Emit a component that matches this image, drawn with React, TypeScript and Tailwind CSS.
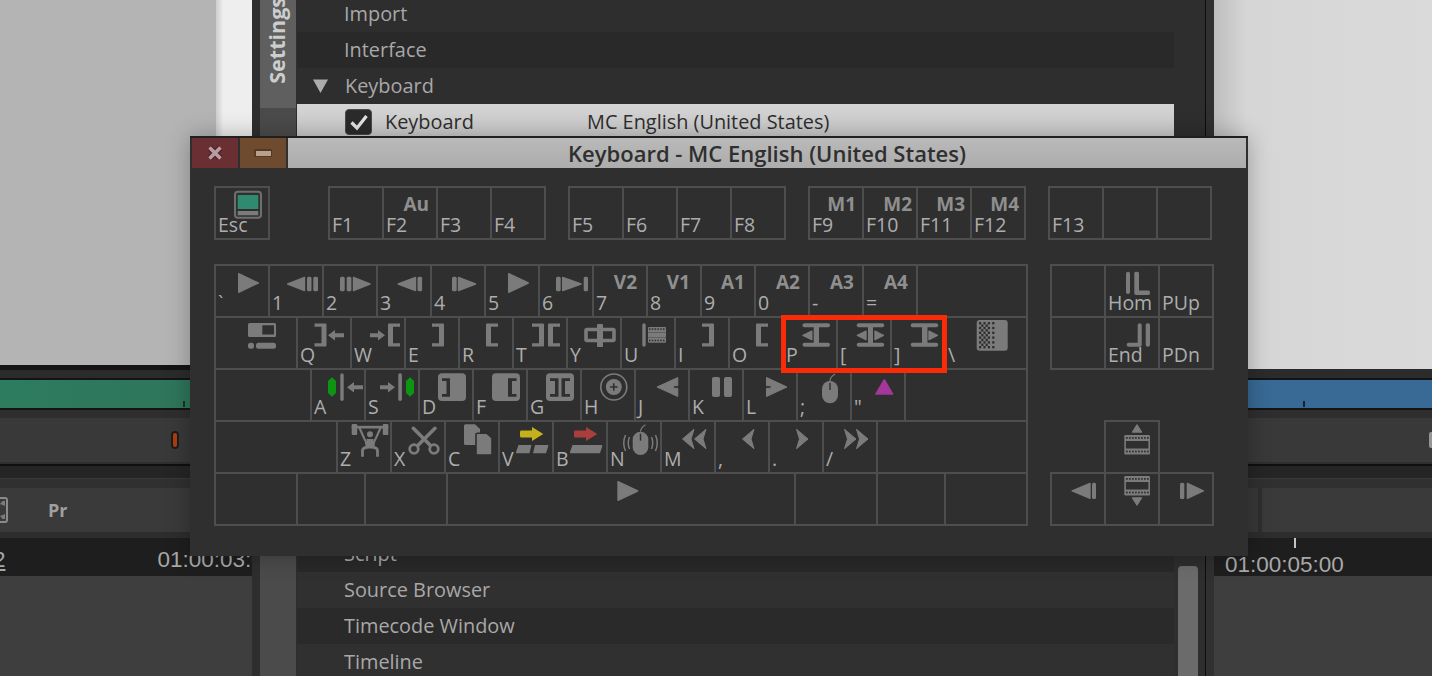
import React from 'react'

type Key = {
  w?: number
  label?: string
  tag?: string
  tagCls?: string
  icon?: React.ReactNode
}

const PURE = 54

// shapes share the grey fill from the svg wrapper
const Tri = ({ base, tip, y1, y2, fill }: { base: number; tip: number; y1: number; y2: number; fill?: string }) => (
  <path
    d={`M${base} ${y1} L${tip} ${(y1 + y2) / 2} L${base} ${y2} Z`}
    stroke={fill || '#7b7b7b'}
    fill={fill}
    strokeWidth="1.4"
    strokeLinejoin="round"
  />
)
const Up = ({ x1, x2, y1, y2, flip }: { x1: number; x2: number; y1: number; y2: number; flip?: boolean }) => (
  <path
    d={flip ? `M${x1} ${y1} H${x2} L${(x1 + x2) / 2} ${y2} Z` : `M${x1} ${y2} H${x2} L${(x1 + x2) / 2} ${y1} Z`}
    stroke="#7b7b7b"
    strokeWidth="1"
    strokeLinejoin="round"
  />
)
const Bar = ({ x, y, w, h, r = 1.5 }: { x: number; y: number; w: number; h: number; r?: number }) => (
  <rect x={x} y={y} width={w} height={h} rx={r} />
)
const BrR = ({ x, w = 12, fill }: { x: number; w?: number; fill?: string }) => (
  <path
    fill={fill}
    d={`M${x} 5.5 H${x + w - 1} Q${x + w} 5.5 ${x + w} 6.5 V27.5 Q${x + w} 28.5 ${x + w - 1} 28.5 H${x} V25.3 H${x + w - 5} V8.7 H${x} Z`}
  />
)
const BrL = ({ x, w = 12, fill }: { x: number; w?: number; fill?: string }) => (
  <path
    fill={fill}
    d={`M${x + w} 5.5 H${x + 1} Q${x} 5.5 ${x} 6.5 V27.5 Q${x} 28.5 ${x + 1} 28.5 H${x + w} V25.3 H${x + 5} V8.7 H${x + w} Z`}
  />
)
const ArrowL = ({ x, y = 17.3 }: { x: number; y?: number }) => (
  <path d={`M${x} ${y} L${x + 7} ${y - 5.3} V${y - 2} H${x + 16} V${y + 2} H${x + 7} V${y + 5.3} Z`} />
)
const ArrowR = ({ x, y = 17.3 }: { x: number; y?: number }) => (
  <path d={`M${x + 15} ${y} L${x + 8} ${y - 5.3} V${y - 2} H${x} V${y + 2} H${x + 8} V${y + 5.3} Z`} />
)
const Hex = ({ x }: { x: number }) => (
  <path d={`M${x + 4} 7.3 L${x + 8} 11 V23 L${x + 4} 26.7 L${x} 23 V11 Z`} fill="#0d9413" />
)
const ChevL = ({ x, w = 11.5 }: { x: number; w?: number }) => (
  <path
    d={`M${x} 17 L${x + w} 7.3 L${x + w - 3} 17 L${x + w} 26.7 Z`}
    stroke="#7b7b7b"
    strokeWidth="1"
    strokeLinejoin="round"
  />
)
const ChevR = ({ x, w = 11.5 }: { x: number; w?: number }) => (
  <path
    d={`M${x + w} 17 L${x} 7.3 L${x + 3} 17 L${x} 26.7 Z`}
    stroke="#7b7b7b"
    strokeWidth="1"
    strokeLinejoin="round"
  />
)
const Trim = ({ x }: { x: number }) => (
  <>
    <Bar x={x} y={5.3} w={27.5} h={4} r={2} />
    <Bar x={x} y={24.7} w={27.5} h={4} r={2} />
  </>
)
const Mouse = ({ x, y, w, h }: { x: number; y: number; w: number; h: number }) => (
  <>
    <rect x={x} y={y} width={w} height={h} rx={w / 2} />
    <path d={`M${x + w / 2} ${y + 2} V${y + 9}`} stroke="#2f2f2f" strokeWidth="1.4" fill="none" />
    <path d={`M${x + w / 2} ${y} Q${x + w / 2} ${y - 4} ${x + w / 2 + 5} ${y - 7}`} stroke="#7b7b7b" strokeWidth="1.2" fill="none" />
  </>
)
const FilmStrip = ({ x, y }: { x: number; y: number }) => (
  <>
    <rect x={x} y={y} width={25.7} height={19.5} rx={1.2} />
    <rect x={x + 1.6} y={y + 6} width={22.5} height={7.5} fill="#2f2f2f" />
    {[0, 1, 2, 3, 4, 5, 6, 7].map((i) => (
      <React.Fragment key={i}>
        <rect x={x + 1.8 + i * 3} y={y + 2} width={1.6} height={1.8} fill="#2f2f2f" />
        <rect x={x + 1.8 + i * 3} y={y + 15.6} width={1.6} height={1.8} fill="#2f2f2f" />
      </React.Fragment>
    ))}
  </>
)

// dithered square on the backslash key, dense on the left and solid on the right
const Dither = () => {
  const dots: React.ReactNode[] = []
  for (let c = 0; c < 8; c++) {
    for (let r = 0; r < 11; r++) {
      const keep = c < 5 ? (r + c) % 2 === 0 : (r + c) % 2 === 0 && r % 2 === 0
      if (keep) dots.push(<rect key={`${c}-${r}`} x={33 + c * 2.2} y={4 + r * 2.4} width={2.2} height={2.4} fill="#2f2f2f" />)
    }
  }
  return (
    <>
      <rect x={30.7} y={2} width={31} height={30.7} rx={3} />
      {dots}
    </>
  )
}

const fnGroups: Key[][] = [
  [
    {
      w: PURE,
      label: 'Esc',
      icon: (
        <>
          <rect x={19} y={3.8} width={26} height={26} rx={3} fill="none" stroke="#6f6f6f" strokeWidth="2" />
          <rect x={21.7} y={7} width={20.6} height={14} fill="#2f8a70" />
          <rect x={21.7} y={23} width={20.6} height={4.3} fill="#7b7b7b" />
        </>
      ),
    },
  ],
  [
    { label: 'F1' },
    { label: 'F2', tag: 'Au', tagCls: 'mr-[7px]' },
    { label: 'F3' },
    { label: 'F4' },
  ],
  [{ label: 'F5' }, { label: 'F6' }, { label: 'F7' }, { label: 'F8' }],
  [
    { label: 'F9', tag: 'M1', tagCls: 'mr-[6px]' },
    { label: 'F10', tag: 'M2', tagCls: 'mr-[4px]' },
    { label: 'F11', tag: 'M3', tagCls: 'mr-[5px]' },
    { label: 'F12', tag: 'M4', tagCls: 'mr-[5px]' },
  ],
  [{ label: 'F13' }, {}, {}],
]

const rows: Key[][] = [
  [
    { label: '`', icon: <Tri base={22.7} tip={42.3} y1={7.7} y2={26.3} /> },
    {
      label: '1',
      icon: (
        <>
          <Tri base={34.5} tip={17.7} y1={11.5} y2={24.5} />
          <Bar x={37} y={10.7} w={4.5} h={14.6} />
          <Bar x={43.3} y={10.7} w={4.7} h={14.6} />
        </>
      ),
    },
    {
      label: '2',
      icon: (
        <>
          <Bar x={16} y={10.7} w={4.7} h={14.6} />
          <Bar x={22.7} y={10.7} w={4.7} h={14.6} />
          <Tri base={29.5} tip={46} y1={11.5} y2={24.5} />
        </>
      ),
    },
    {
      label: '3',
      icon: (
        <>
          <Tri base={37.5} tip={20.2} y1={11.5} y2={24.5} />
          <Bar x={39.5} y={10.7} w={4.6} h={14.6} />
        </>
      ),
    },
    {
      label: '4',
      icon: (
        <>
          <Bar x={20} y={10.7} w={4.7} h={14.6} />
          <Tri base={26.5} tip={43.5} y1={11.5} y2={24.5} />
        </>
      ),
    },
    { label: '5', icon: <Tri base={22.7} tip={42.3} y1={7.7} y2={26.3} /> },
    {
      label: '6',
      icon: (
        <>
          <Bar x={16} y={10.7} w={4.7} h={14.6} />
          <Tri base={22.7} tip={41} y1={11.5} y2={24.5} />
          <Bar x={43.7} y={10.7} w={4.3} h={14.6} />
        </>
      ),
    },
    { label: '7', tag: 'V2', tagCls: 'mr-[9px]' },
    { label: '8', tag: 'V1', tagCls: 'mr-[10px]' },
    { label: '9', tag: 'A1', tagCls: 'mr-[9px]' },
    { label: '0', tag: 'A2', tagCls: 'mr-[8px]' },
    { label: '-', tag: 'A3', tagCls: 'mr-[8px]' },
    { label: '=', tag: 'A4', tagCls: 'mr-[8px]' },
    { w: 110 },
  ],
  [
    {
      w: 82,
      icon: (
        <>
          <rect x={32} y={5} width={28} height={14} rx={1.5} />
          <rect x={46.3} y={7.3} width={11.7} height={9.2} fill="#2f2f2f" />
          <rect x={32} y={24.7} width={6} height={6} rx={2.5} />
          <rect x={40} y={24.7} width={20} height={6} rx={2.5} />
        </>
      ),
    },
    { label: 'Q', icon: <><BrR x={16.5} /><ArrowL x={30} /></> },
    { label: 'W', icon: <><ArrowR x={18} /><BrL x={36} /></> },
    { label: 'E', icon: <BrR x={26} /> },
    { label: 'R', icon: <BrL x={26} /> },
    { label: 'T', icon: <><BrR x={18} /><BrL x={34} /></> },
    {
      label: 'Y',
      icon: (
        <>
          <rect x={18} y={11.5} width={28} height={11} rx={1} fill="none" stroke="#7b7b7b" strokeWidth="3.6" />
          <rect x={29} y={6} width={6} height={23} rx={1} />
        </>
      ),
    },
    {
      label: 'U',
      icon: (
        <>
          <Bar x={20.3} y={5.3} w={3.4} h={23.4} r={1.7} />
          <rect x={26} y={9} width={18} height={15.7} rx={1} />
          {[0, 1, 2, 3, 4, 5].map((i) => (
            <React.Fragment key={i}>
              <rect x={27 + i * 2.8} y={10.3} width={1.5} height={1.6} fill="#2f2f2f" />
              <rect x={27 + i * 2.8} y={21.7} width={1.5} height={1.6} fill="#2f2f2f" />
            </React.Fragment>
          ))}
          <rect x={26} y={14} width={18} height={0.8} fill="#5a5a5a" />
          <rect x={26} y={19} width={18} height={0.8} fill="#5a5a5a" />
        </>
      ),
    },
    { label: 'I', icon: <BrR x={26} /> },
    { label: 'O', icon: <BrL x={26} /> },
    {
      label: 'P',
      icon: (
        <>
          <Trim x={18.5} />
          <Bar x={29.7} y={6} w={5.3} h={22} r={0} />
          <Tri base={27.8} tip={19} y1={13.2} y2={21.6} />
        </>
      ),
    },
    {
      label: '[',
      icon: (
        <>
          <Trim x={18.7} />
          <Bar x={30} y={6} w={5} h={22} r={0} />
          <Tri base={28} tip={19.4} y1={13.2} y2={21.6} />
          <Tri base={37} tip={45.4} y1={13.2} y2={21.6} />
        </>
      ),
    },
    {
      label: ']',
      icon: (
        <>
          <Trim x={18.7} />
          <Bar x={30} y={6} w={5.5} h={22} r={0} />
          <Tri base={37} tip={45.4} y1={13.2} y2={21.6} />
        </>
      ),
    },
    { w: 82, label: '\\', icon: <Dither /> },
  ],
  [
    { w: 96 },
    {
      label: 'A',
      icon: (
        <>
          <Hex x={16} />
          <Bar x={28.3} y={3.3} w={3.4} h={27.7} r={1.7} />
          <ArrowL x={35} />
        </>
      ),
    },
    {
      label: 'S',
      icon: (
        <>
          <ArrowR x={14} />
          <Bar x={32.3} y={3.3} w={3.6} h={27.7} r={1.7} />
          <Hex x={40} />
        </>
      ),
    },
    {
      label: 'D',
      icon: (
        <>
          <rect x={18} y={3.3} width={28} height={27.7} rx={4} />
          <path d="M22 8.3 H30 V26.7 H22 V24 H26.5 V11 H22 Z" fill="#2f2f2f" />
        </>
      ),
    },
    {
      label: 'F',
      icon: (
        <>
          <rect x={18} y={3.3} width={28} height={27.7} rx={4} />
          <path d="M42.5 8.3 H34 V26.7 H42.5 V24 H38 V11 H42.5 Z" fill="#2f2f2f" />
        </>
      ),
    },
    {
      label: 'G',
      icon: (
        <>
          <rect x={18} y={3.3} width={28} height={27.7} rx={4} />
          <path d="M22 8.3 H30.5 V26.7 H22 V24 H27 V11 H22 Z" fill="#2f2f2f" />
          <path d="M42 8.3 H33.5 V26.7 H42 V24 H37 V11 H42 Z" fill="#2f2f2f" />
        </>
      ),
    },
    {
      label: 'H',
      icon: (
        <>
          <circle cx={31.8} cy={17} r={13} fill="none" stroke="#7b7b7b" strokeWidth="1.6" />
          <circle cx={31.8} cy={17} r={8} />
          <path d="M31.8 13.3 V20.7 M28.1 17 H35.5" stroke="#2f2f2f" strokeWidth="1.5" />
        </>
      ),
    },
    {
      label: 'J',
      icon: (
        <path
          d="M21 17 L41.8 7.5 V15.7 H37.5 V18.3 H41.8 V26.5 Z"
          stroke="#7b7b7b"
          strokeWidth="1"
          strokeLinejoin="round"
        />
      ),
    },
    {
      label: 'K',
      icon: (
        <>
          <Bar x={22} y={7} w={8} h={20} r={2} />
          <Bar x={34} y={7} w={8} h={20} r={2} />
        </>
      ),
    },
    {
      label: 'L',
      icon: (
        <path
          d="M43 17 L22.5 7.5 V15.7 H27 V18.3 H22.5 V26.5 Z"
          stroke="#7b7b7b"
          strokeWidth="1"
          strokeLinejoin="round"
        />
      ),
    },
    { label: ';', icon: <Mouse x={24} y={11} w={16} h={22.3} /> },
    {
      label: '"',
      icon: (
        <path d="M32.3 10 L40.5 24 H24 Z" fill="#a3379b" stroke="#a3379b" strokeWidth="1.6" strokeLinejoin="round" />
      ),
    },
    { w: 122 },
  ],
  [
    { w: 122 },
    {
      label: 'Z',
      icon: (
        <>
          <rect x={13.7} y={2} width={5.5} height={11} rx={1} />
          <rect x={44.8} y={2} width={5.5} height={11} rx={1} />
          <rect x={13.7} y={3.8} width={36.6} height={2.7} />
          <circle cx={32} cy={12.3} r={3} />
          <path
            d="M21.5 6 L26 16 Q28 19 28.5 23 H35.5 Q36 19 38 16 L42.5 6"
            fill="none"
            stroke="#7b7b7b"
            strokeWidth="2.2"
          />
          <path d="M28.5 17 H35.5 V24 H28.5 Z" />
          <path d="M24.5 34.7 V28.5 Q24.5 25.5 31 25 H33 Q39.5 25.5 39.5 28.5 V34.7" fill="none" stroke="#7b7b7b" strokeWidth="2.8" />
        </>
      ),
    },
    {
      label: 'X',
      icon: (
        <>
          <path d="M21.3 6.3 L38 23 M43 6.3 L26.3 23" stroke="#7b7b7b" strokeWidth="3.6" strokeLinecap="round" />
          <circle cx={22} cy={27} r={4.3} fill="#2f2f2f" stroke="#7b7b7b" strokeWidth="2.8" />
          <circle cx={42} cy={27} r={4.3} fill="#2f2f2f" stroke="#7b7b7b" strokeWidth="2.8" />
        </>
      ),
    },
    {
      label: 'C',
      icon: (
        <>
          <path d="M19.5 2.3 H29 L34 7 V21.5 Q34 23 32.5 23 H19.5 Q18 23 18 21.5 V3.8 Q18 2.3 19.5 2.3 Z" />
          <path
            d="M31.5 11.3 H41 L46 16 V31.5 Q46 33 44.5 33 H31.5 Q30 33 30 31.5 V12.8 Q30 11.3 31.5 11.3 Z"
            stroke="#2f2f2f"
            strokeWidth="1.6"
          />
        </>
      ),
    },
    {
      label: 'V',
      icon: (
        <>
          <path
            d="M21.5 8.6 H32 V5 L43.3 12 L32 19 V15.6 H21.5 Q20 15.6 20 14 V10 Q20 8.6 21.5 8.6 Z"
            fill="#c3b11e"
          />
          <path d="M18.5 23 H31.5 L29.5 31.3 H16.5 Q15.7 31.3 16 30 Z" />
          <path d="M35 23 H47.8 Q48.6 23 48.3 24 L46 31.3 H33 Z" />
        </>
      ),
    },
    {
      label: 'B',
      icon: (
        <>
          <path
            d="M21.5 8.6 H32 V5 L43.3 12 L32 19 V15.6 H21.5 Q20 15.6 20 14 V10 Q20 8.6 21.5 8.6 Z"
            fill="#a93f3d"
          />
          <path d="M18.5 23 H47.8 Q48.6 23 48.3 24 L46 31.3 H16.5 Q15.7 31.3 16 30 Z" />
        </>
      ),
    },
    {
      label: 'N',
      icon: (
        <>
          <Mouse x={24.7} y={9.7} w={15.6} h={23.3} />
          <path
            d="M21.5 15 Q19 21 21.5 27 M17.5 13 Q14 21 17.5 29 M43.5 15 Q46 21 43.5 27 M47.5 13 Q51 21 47.5 29"
            fill="none"
            stroke="#7b7b7b"
            strokeWidth="1.5"
          />
        </>
      ),
    },
    { label: 'M', icon: <><ChevL x={20.5} /><ChevL x={32.5} /></> },
    { label: ',', icon: <ChevL x={26.5} /> },
    { label: '.', icon: <ChevR x={26.5} /> },
    { label: '/', icon: <><ChevR x={20.5} /><ChevR x={32.5} /></> },
    { w: 150 },
  ],
  [
    { w: 82 },
    { w: 68 },
    { w: 82 },
    { w: 348, icon: <Tri base={170} tip={189.7} y1={7.7} y2={26.3} /> },
    { w: 82 },
    { w: 68 },
    { w: 82 },
  ],
]

const navRows: Key[][] = [
  [
    {},
    {
      label: 'Hom',
      icon: (
        <>
          <Bar x={20} y={5.7} w={4} h={22.3} r={2} />
          <path d="M28.3 7 Q28.3 5.7 30.5 5.7 Q33 5.7 33 7 V24.5 H42.5 Q44 24.5 44 26.5 Q44 29 42.5 29 H30 Q28.3 29 28.3 27 Z" />
        </>
      ),
    },
    { label: 'PUp' },
  ],
  [
    {},
    {
      label: 'End',
      icon: (
        <>
          <path d="M31.7 7 Q31.7 5.3 33.7 5.3 Q35.7 5.3 35.7 7 V27 Q35.7 28.7 34 28.7 H22.5 Q20.7 28.7 20.7 26.7 Q20.7 24.7 22.5 24.7 H31.7 Z" />
          <Bar x={39.7} y={5.3} w={4.3} h={23.4} r={2} />
        </>
      ),
    },
    { label: 'PDn' },
  ],
]

const KeyCap = ({ k, h = 52 }: { k: Key; h?: number }) => {
  const w = k.w ?? PURE
  return (
    <div
      className="grid shrink-0 border-r-2 border-b-2 border-[#4e4e4e]"
      style={{ width: w, height: h }}
    >
      {k.icon && (
        <svg
          viewBox={`0 0 ${w - 2} ${h - 2}`}
          className="col-start-1 row-start-1 h-full w-full fill-[#7b7b7b]"
        >
          {k.icon}
        </svg>
      )}
      {k.tag && (
        <span
          className={`col-start-1 row-start-1 mt-[7px] justify-self-end self-start text-[19px] leading-[18px] font-bold text-[#8f8f8f] ${k.tagCls}`}
        >
          {k.tag}
        </span>
      )}
      {k.label && (
        <span className="col-start-1 row-start-1 self-end justify-self-start pb-[3px] pl-[2px] text-[19.5px] leading-[20px] text-[#adadad]">
          {k.label}
        </span>
      )}
    </div>
  )
}

const KeyRow = ({ keys }: { keys: Key[] }) => (
  <div className="flex">
    {keys.map((k, i) => (
      <KeyCap key={i} k={k} />
    ))}
  </div>
)

const KeyBlock = ({ children, className = '' }: { children: React.ReactNode; className?: string }) => (
  <div className={`border-t-2 border-l-2 border-[#4e4e4e] ${className}`}>{children}</div>
)

const Dialog = () => (
  <div className="absolute top-[136px] left-[190px] flex h-[420px] w-[1058px] flex-col bg-[#2f2f2f] font-['Open_Sans',sans-serif] shadow-[0_0_22px_rgba(0,0,0,0.28)]">
    <div className="flex h-[32px] shrink-0 border-t-2 border-[#1f1f1f] bg-[#2f2f2f] px-[2px]">
      <div className="flex w-[46px] items-center justify-center bg-[#6a2f33]">
        <svg viewBox="0 0 18 18" className="h-[18px] w-[18px]">
          <path d="M3.5 3.5 L14.5 14.5 M14.5 3.5 L3.5 14.5" stroke="#552428" strokeWidth="6.4" />
          <path d="M3.5 3.5 L14.5 14.5 M14.5 3.5 L3.5 14.5" stroke="#b89da0" strokeWidth="3.6" />
        </svg>
      </div>
      <div className="ml-[2px] flex w-[46px] items-center justify-center bg-[#6e4b2e]">
        <div className="h-[8px] w-[18px] rounded-[1px] bg-[#57391f] p-[1.5px]">
          <div className="h-full w-full bg-[#b8a08c]" />
        </div>
      </div>
      <div className="ml-[2px] flex flex-1 items-center justify-center bg-gradient-to-b from-[#b9b9b9] to-[#adadad] text-[22px] leading-none font-semibold whitespace-nowrap text-[#2f2f2f]">
        Keyboard - MC English (United States)
      </div>
    </div>

    <div className="pt-[18px] pl-[24px]">
      <div className="flex">
        <KeyBlock>
          <KeyRow keys={fnGroups[0]} />
        </KeyBlock>
        <KeyBlock className="ml-[58px]">
          <KeyRow keys={fnGroups[1]} />
        </KeyBlock>
        <KeyBlock className="ml-[22px]">
          <KeyRow keys={fnGroups[2]} />
        </KeyBlock>
        <KeyBlock className="ml-[22px]">
          <KeyRow keys={fnGroups[3]} />
        </KeyBlock>
        <KeyBlock className="ml-[22px]">
          <KeyRow keys={fnGroups[4]} />
        </KeyBlock>
      </div>

      <div className="mt-[24px] flex">
        <KeyBlock className="relative">
          {rows.map((r, i) => (
            <KeyRow key={i} keys={r} />
          ))}
          <div className="absolute top-[49px] left-[565px] h-[58px] w-[166px] border-[5px] border-[#fa2c08]" />
        </KeyBlock>

        <div className="ml-[22px]">
          <KeyBlock>
            {navRows.map((r, i) => (
              <KeyRow key={i} keys={r} />
            ))}
          </KeyBlock>
          <div className="mt-[50px] ml-[54px] w-[56px]">
            <KeyBlock>
              <KeyRow
                keys={[
                  {
                    icon: (
                      <>
                        <Up x1={26.2} x2={35.8} y1={2.6} y2={10.2} />
                        <FilmStrip x={18.3} y={13} />
                      </>
                    ),
                  },
                ]}
              />
            </KeyBlock>
          </div>
          <div className="-mt-[2px]">
            <KeyBlock>
              <KeyRow
                keys={[
                  {
                    icon: (
                      <>
                        <Tri base={38} tip={20.2} y1={9.5} y2={24.3} />
                        <Bar x={40} y={8.7} w={4} h={16.3} r={1.5} />
                      </>
                    ),
                  },
                  {
                    icon: (
                      <>
                        <FilmStrip x={18.3} y={2} />
                        <Up x1={26.2} x2={35.8} y1={23.8} y2={31.4} flip />
                      </>
                    ),
                  },
                  {
                    icon: (
                      <>
                        <Bar x={20} y={8.7} w={4.3} h={16.3} r={1.5} />
                        <Tri base={27.4} tip={43.4} y1={9.5} y2={24.3} />
                      </>
                    ),
                  },
                ]}
              />
            </KeyBlock>
          </div>
        </div>
      </div>
    </div>
  </div>
)

// strips that run behind the settings window, left and right
const TrackStack = ({ color, children, footer }: { color: string; children: React.ReactNode; footer: React.ReactNode }) => (
  <div className="flex flex-1 flex-col">
    <div className="h-[8px] shrink-0 bg-[#2b2b2b]" />
    <div className="h-[2px] shrink-0 bg-[#141414]" />
    <div className={`flex h-[28px] shrink-0 items-end ${color}`}>{children}</div>
    <div className="h-[2px] shrink-0 bg-[#141414]" />
    {footer}
  </div>
)

const LeftColumn = () => (
  <div className="flex h-full w-[252px] shrink-0 flex-col font-['Liberation_Sans',sans-serif]">
    <div className="flex h-[365px] shrink-0">
      <div className="w-[216px] bg-[#b4b4b4]" />
      <div className="w-[36px] bg-gradient-to-r from-[#cdcdcd] to-[#eeeeee] to-[20%]" />
    </div>
    <div className="h-[5px] shrink-0 bg-[#141414]" />
    <TrackStack
      color="bg-gradient-to-r from-[#2d7c60] to-[#2f7359]"
      footer={
        <>
          <div className="h-[8px] shrink-0 bg-[#2e2e2e]" />
          <div className="flex h-[44px] shrink-0 items-center justify-end bg-[#393939] pr-[73px]">
            <div className="h-[18px] w-[8px] rounded-full border-2 border-[#1c1c1c] bg-[#ad3d10]" />
          </div>
          <div className="h-[2px] shrink-0 bg-[#2f2f2f]" />
          <div className="h-[2px] shrink-0 bg-[#0f0f0f]" />
          <div className="h-[12px] shrink-0 bg-[#252525]" />
          <div className="h-[10px] shrink-0 border-t border-[#3a3a3a] bg-[#303030]" />
          <div className="flex h-[44px] shrink-0 items-center bg-[#3a3a3a]">
            <svg viewBox="0 0 8 26" className="h-[26px] w-[8px]">
              <path d="M-4 1 H5 Q7 1 7 3 V23 Q7 25 5 25 H-4" fill="none" stroke="#8a8a8a" strokeWidth="2" />
              <path d="M0 7 L2.5 4 H5 V9 Z M0 19 L2.5 22 H5 V17 Z" fill="#7b7b7b" />
            </svg>
            <span className="ml-[40px] font-['Open_Sans',sans-serif] text-[18px] font-bold text-[#9f9f9f]">Pr</span>
          </div>
          <div className="h-[6px] shrink-0 bg-[#2d2d2d]" />
          <div className="flex h-[38px] shrink-0 items-center overflow-hidden bg-[#1e1e1e] pt-[5px] text-[22.5px] whitespace-nowrap text-[#a8a8a8]">
            <span className="-ml-[7px] underline">2</span>
            <span className="ml-[152px]">01:00:03:00</span>
          </div>
          <div className="flex-1 bg-[#3e3e3e]" />
        </>
      }
    >
      <div className="mb-[1px] ml-[183px] h-[6px] w-[2px] bg-[#143528]" />
    </TrackStack>
  </div>
)

const RightColumn = () => (
  <div className="flex h-full flex-1 flex-col font-['Liberation_Sans',sans-serif]">
    <div className="h-[369px] shrink-0 bg-[linear-gradient(90deg,#bdbdbd,#d6d6d6_32px,#dadada)]" />
    <div className="h-[1px] shrink-0 bg-[#2b2b2b]" />
    <TrackStack
      color="bg-[#386a95]"
      footer={
        <>
          <div className="h-[8px] shrink-0 bg-[#2e2e2e]" />
          <div className="flex h-[44px] shrink-0 items-center justify-end bg-[#393939]">
            <div className="h-[16px] w-[3px] rounded-l-[2px] bg-[#959595]" />
          </div>
          <div className="h-[2px] shrink-0 bg-[#2f2f2f]" />
          <div className="h-[2px] shrink-0 bg-[#0f0f0f]" />
          <div className="h-[12px] shrink-0 bg-[#252525]" />
          <div className="h-[10px] shrink-0 border-t border-[#3a3a3a] bg-[#303030]" />
          <div className="flex h-[44px] shrink-0 bg-[#2e2e2e]">
            <div className="w-[44px] bg-[#383838]" />
            <div className="ml-[4px] flex-1 bg-[#3a3a3a]" />
          </div>
          <div className="h-[6px] shrink-0 bg-[#2d2d2d]" />
          <div className="h-[38px] shrink-0 bg-[#1e1e1e]">
            <div className="ml-[80px] h-[10px] w-[2px] bg-[#c4c4c4]" />
            <div className="pt-[5px] pl-[11px] text-[22.5px] leading-[24px] text-[#a8a8a8]">01:00:05:00</div>
          </div>
          <div className="flex-1 bg-[#3e3e3e]" />
        </>
      }
    >
      <div className="mb-[1px] ml-[89px] h-[6px] w-[2px] bg-[#10233a]" />
    </TrackStack>
  </div>
)

const ListRow = ({ children, className = '' }: { children: React.ReactNode; className?: string }) => (
  <div className={`flex h-[36px] shrink-0 items-center text-[19.9px] ${className}`}>{children}</div>
)

const SettingsWindow = () => (
  <div className="flex h-full w-[962px] shrink-0 bg-[#2e2e2e] pl-[8px] font-['Open_Sans',sans-serif]">
    <div className="flex w-[36px] shrink-0 flex-col bg-[#4b4b4b]">
      <div className="flex h-[108px] flex-col items-center justify-end overflow-hidden bg-[#5f5f5f] pr-[3px] pb-[24px]">
        <span className="shrink-0 rotate-180 text-[21.5px] leading-none font-bold text-[#cdcdcd] [writing-mode:vertical-rl]">
          Settings
        </span>
      </div>
    </div>
    <div className="ml-[1px] flex w-[877px] shrink-0 flex-col overflow-hidden">
      <ListRow className="-mt-[4px] bg-[#2e2e2e] pl-[47px] text-[#a8a8a8]">Import</ListRow>
      <ListRow className="bg-[#292929] pl-[47px] text-[#a8a8a8]">Interface</ListRow>
      <ListRow className="bg-[#2e2e2e] pl-[16px] text-[#a8a8a8]">
        <svg viewBox="0 0 15 14" className="mr-[17px] h-[14px] w-[15px] fill-[#acacac]">
          <path d="M0 0.5 H15 L7.5 14 Z" />
        </svg>
        Keyboard
      </ListRow>
      <ListRow className="bg-gradient-to-b from-[#d4d4d4] to-[#c8c8c8] pl-[48px] text-[#2e2e2e]">
        <div className="mr-[13px] flex h-[26px] w-[27px] items-center justify-center rounded-[4px] border border-[#4a4a4a] bg-[#2b2b2b]">
          <svg viewBox="0 0 20 18" className="h-[18px] w-[20px]">
            <path d="M2.5 9.5 L8 15 L17.5 3" fill="none" stroke="#e4e4e4" strokeWidth="3.2" />
          </svg>
        </div>
        <span className="w-[202px]">Keyboard</span>
        MC English (United States)
      </ListRow>
      <div className="flex-1" />
      <ListRow className="bg-[#292929] pl-[47px] text-[#a8a8a8]">Script</ListRow>
      <ListRow className="bg-[#303030] pl-[47px] text-[#a8a8a8]">Source Browser</ListRow>
      <ListRow className="bg-[#2a2a2a] pl-[47px] text-[#a8a8a8]">Timecode Window</ListRow>
      <ListRow className="-mb-[4px] bg-[#303030] pl-[47px] text-[#a8a8a8]">Timeline</ListRow>
    </div>
    <div className="flex w-[31px] shrink-0 flex-col justify-end pl-[4px]">
      <div className="h-[110px] w-[20px] rounded-t-[4px] bg-[#6b6b6b]" />
    </div>
    <div className="w-[1px] shrink-0 bg-[#0c0c0c]" />
    <div className="w-[8px] shrink-0 bg-[#303030]" />
  </div>
)

const App = () => {
  return (
    <div className="relative flex h-[676px] w-[1432px] overflow-hidden bg-[#2b2b2b]">
      <LeftColumn />
      <SettingsWindow />
      <RightColumn />
      <Dialog />
    </div>
  )
}

export default App
